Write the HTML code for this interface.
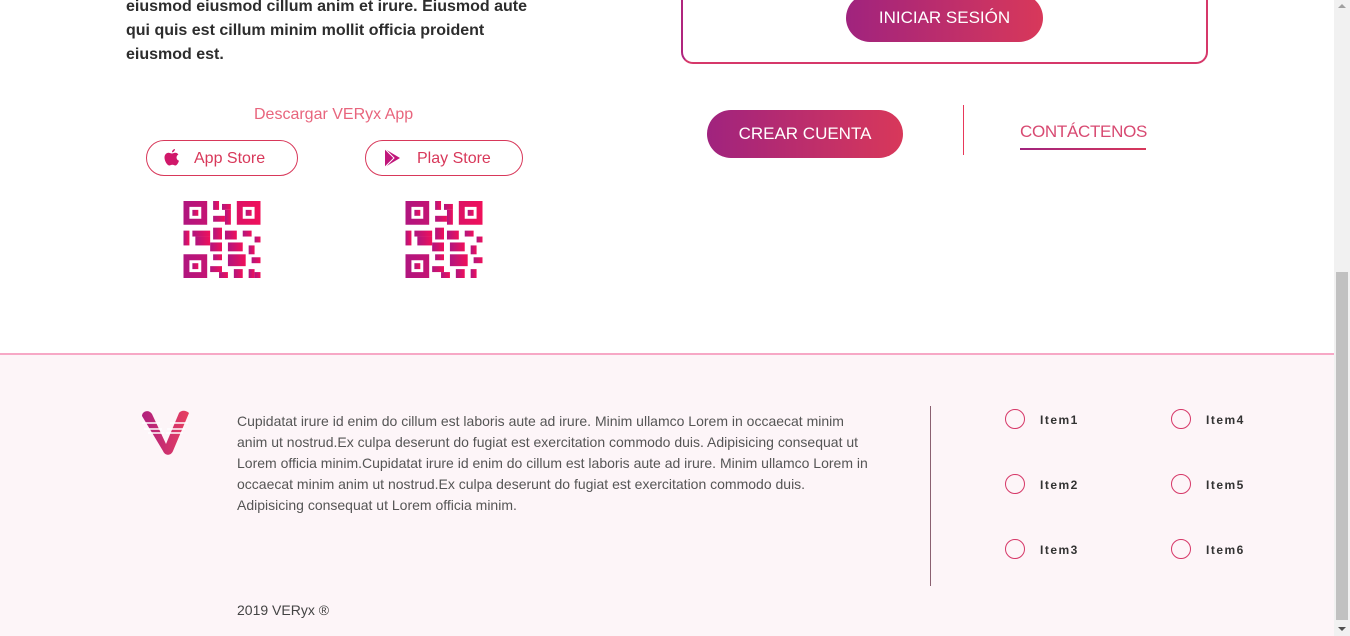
<!DOCTYPE html>
<html><head><meta charset="utf-8"><style>
*{margin:0;padding:0;box-sizing:border-box}
body{width:1350px;height:636px;overflow:hidden;background:#fff;font-family:"Liberation Sans",sans-serif;position:relative}
.a{position:absolute}
.grad{background:linear-gradient(90deg,#a0237e,#d8385a)}
.btn{position:absolute;color:#fff;font-size:17px;text-align:center;border-radius:24px}
.pill{position:absolute;border:1px solid #d8385a;border-radius:18px;height:36px;color:#d8385a;font-size:16px;line-height:34px}
.it{position:absolute;font-size:12px;letter-spacing:1.5px;color:#333;font-weight:bold}
.c{position:absolute;width:20px;height:20px;border:1.5px solid #d63868;border-radius:50%}
</style></head><body>
<div class="a" style="left:126px;top:-5px;width:420px;font-size:16px;line-height:24px;font-weight:bold;color:#2d2d2d">eiusmod eiusmod cillum anim et irure. Eiusmod aute qui quis est cillum minim mollit officia proident eiusmod est.</div>
<div class="a" style="left:254px;top:106px;font-size:16px;color:#e8657d">Descargar VERyx App</div>
<div class="pill" style="left:146px;top:140px;width:152px"><svg class="a" style="left:16px;top:7px" width="18" height="20" viewBox="0 0 18 20"><path d="M12 1c0 2-2 3.5-3 3.3C9 2.5 10.5 1 12 1zM9 5.5c1 0 2-.8 3.2-.8 1.5 0 2.6.8 3.2 1.8-2.8 1.5-2.3 5.3.6 6.3-.7 2-2 4.7-3.6 4.7-1.2 0-1.5-.7-3-.7s-2 .7-3.2.7C4.3 17.5 1.5 13 1.5 9.5c0-3 2-4.8 3.9-4.8 1.3 0 2.4.8 3.6.8z" fill="#d0186a"/></svg><span class="a" style="left:47px;top:1px">App Store</span></div>
<div class="pill" style="left:365px;top:140px;width:158px"><svg class="a" style="left:17px;top:7px" width="18" height="20" viewBox="0 0 18 20"><path d="M2 1l15 9-15 9z" fill="#c0157a"/><path d="M2 1l9 9-9 9" fill="none" stroke="#fff" stroke-width="1"/></svg><span class="a" style="left:51px;top:1px">Play Store</span></div>
<svg class="a" style="left:183px;top:201px" width="78" height="77" viewBox="0 0 26 26"><defs><linearGradient id="g" x1="0" x2="1"><stop offset="0" stop-color="#b0157f"/><stop offset="1" stop-color="#f0105a"/></linearGradient></defs><g fill="url(#g)"><path d="M0 0h8v8H0zM2 2v4h4V2zM18 0h8v8h-8zM20 2v4h4V2zM0 18h8v8H0zM2 20v4h4v-4z" fill-rule="evenodd"/><rect x="3" y="3" width="2" height="2"/><rect x="21" y="3" width="2" height="2"/><rect x="3" y="21" width="2" height="2"/><rect x="10" y="0" width="2" height="3"/><rect x="13" y="1" width="3" height="2"/><rect x="10" y="5" width="4" height="2"/><rect x="14" y="3" width="2" height="5"/><rect x="0" y="10" width="2" height="5"/><rect x="3" y="10" width="6" height="2"/><rect x="4" y="12" width="5" height="3"/><rect x="10" y="9" width="3" height="4"/><rect x="14" y="10" width="4" height="3"/><rect x="20" y="10" width="3" height="2"/><rect x="24" y="12" width="2" height="2"/><rect x="9" y="14" width="4" height="3"/><rect x="15" y="14" width="5" height="3"/><rect x="22" y="15" width="2" height="3"/><rect x="10" y="18" width="3" height="2"/><rect x="15" y="18" width="6" height="4"/><rect x="23" y="19" width="3" height="2"/><rect x="9" y="22" width="4" height="2"/><rect x="12" y="24" width="3" height="2"/><rect x="17" y="23" width="3" height="3"/><rect x="22" y="23" width="2" height="3"/><rect x="24" y="24" width="2" height="2"/></g></svg>
<svg class="a" style="left:405px;top:201px" width="78" height="77" viewBox="0 0 26 26"><g fill="url(#g)"><path d="M0 0h8v8H0zM2 2v4h4V2zM18 0h8v8h-8zM20 2v4h4V2zM0 18h8v8H0zM2 20v4h4v-4z" fill-rule="evenodd"/><rect x="3" y="3" width="2" height="2"/><rect x="21" y="3" width="2" height="2"/><rect x="3" y="21" width="2" height="2"/><rect x="10" y="0" width="2" height="3"/><rect x="13" y="1" width="3" height="2"/><rect x="10" y="5" width="4" height="2"/><rect x="14" y="3" width="2" height="5"/><rect x="0" y="10" width="2" height="5"/><rect x="3" y="10" width="6" height="2"/><rect x="4" y="12" width="5" height="3"/><rect x="10" y="9" width="3" height="4"/><rect x="14" y="10" width="4" height="3"/><rect x="20" y="10" width="3" height="2"/><rect x="24" y="12" width="2" height="2"/><rect x="9" y="14" width="4" height="3"/><rect x="15" y="14" width="5" height="3"/><rect x="22" y="15" width="2" height="3"/><rect x="10" y="18" width="3" height="2"/><rect x="15" y="18" width="6" height="4"/><rect x="23" y="19" width="3" height="2"/><rect x="9" y="22" width="4" height="2"/><rect x="12" y="24" width="3" height="2"/><rect x="17" y="23" width="3" height="3"/><rect x="22" y="23" width="2" height="3"/></g></svg>
<div class="a" style="left:681px;top:-20px;width:527px;height:84px;border:2px solid #d6386a;border-radius:12px;border-left-color:#b0257e"></div>
<div class="btn grad" style="left:846px;top:-6px;width:197px;height:48px;line-height:48px">INICIAR SESIÓN</div>
<div class="btn grad" style="left:707px;top:110px;width:196px;height:48px;line-height:48px">CREAR CUENTA</div>
<div class="a" style="left:963px;top:105px;width:1px;height:50px;background:#e8385a"></div>
<div class="a" style="left:1020px;top:122px;font-size:17px;color:#d84a72;letter-spacing:-0.3px">CONTÁCTENOS</div>
<div class="a grad" style="left:1020px;top:148px;width:126px;height:2px"></div>
<div class="a" style="left:0;top:353px;width:1334px;height:283px;background:#fdf5f8;border-top:2px solid #f7a8c6"></div>
<svg class="a" style="left:140px;top:410px" width="52" height="47" viewBox="0 0 52 47"><defs><linearGradient id="h" x1="0" x2="1"><stop offset="0" stop-color="#b0207e"/><stop offset="1" stop-color="#e84060"/></linearGradient></defs><path d="M2 6c0-5 7-7 10-2l14 30 13-31c2-3 7-3 10 0l-16 38c-2 5-8 5-10 0z" fill="url(#h)"/><path d="M2 13h18M4 19h18M8 23h16M26 23h17M27 19h18M30 13h18" stroke="#fff" stroke-width="1.6"/></svg>
<div class="a" style="left:237px;top:411px;width:632px;font-size:14px;line-height:21px;color:#555">Cupidatat irure id enim do cillum est laboris aute ad irure. Minim ullamco Lorem in occaecat minim anim ut nostrud.Ex culpa deserunt do fugiat est exercitation commodo duis. Adipisicing consequat ut Lorem officia minim.Cupidatat irure id enim do cillum est laboris aute ad irure. Minim ullamco Lorem in occaecat minim anim ut nostrud.Ex culpa deserunt do fugiat est exercitation commodo duis. Adipisicing consequat ut Lorem officia minim.</div>
<div class="a" style="left:237px;top:602px;font-size:14px;color:#444">2019 VERyx ®</div>
<div class="a" style="left:930px;top:406px;width:1px;height:180px;background:#8a6070"></div>
<div class="c" style="left:1005px;top:409px"></div><div class="it" style="left:1040px;top:413px">Item1</div>
<div class="c" style="left:1005px;top:474px"></div><div class="it" style="left:1040px;top:478px">Item2</div>
<div class="c" style="left:1005px;top:539px"></div><div class="it" style="left:1040px;top:543px">Item3</div>
<div class="c" style="left:1171px;top:409px"></div><div class="it" style="left:1206px;top:413px">Item4</div>
<div class="c" style="left:1171px;top:474px"></div><div class="it" style="left:1206px;top:478px">Item5</div>
<div class="c" style="left:1171px;top:539px"></div><div class="it" style="left:1206px;top:543px">Item6</div>
<div class="a" style="left:1334px;top:0;width:16px;height:636px;background:#f1f1f1"></div>
<div class="a" style="left:1336px;top:272px;width:12px;height:348px;background:#c1c1c1"></div>
<div class="a" style="left:1338px;top:4px;width:0;height:0;border-left:4px solid transparent;border-right:4px solid transparent;border-bottom:4px solid #a0a0a0"></div>
<div class="a" style="left:1338px;top:627px;width:0;height:0;border-left:4px solid transparent;border-right:4px solid transparent;border-top:4px solid #505050"></div>
</body></html>
